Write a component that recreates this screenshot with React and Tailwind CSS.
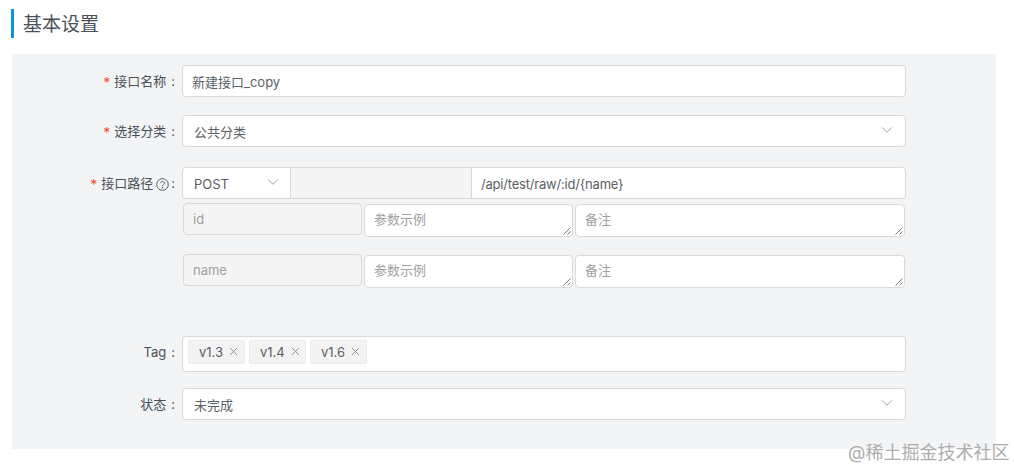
import React from "react";
import { ChevronDown, X } from "lucide-react";

const font = "font-['Inter','Noto_Sans_CJK_SC',sans-serif]";

function Label({ required, children, gap = "ml-[5px]" }) {
  return (
    <div className="w-[170px] shrink-0 h-[32px] flex items-center justify-end pr-[7px] pt-[2px] text-[13px] text-[#4a5058]">
      {required && <span className="text-[#f5482f] mr-[4px] text-[14px]">*</span>}
      {children}
      <span className={gap}>:</span>
    </div>
  );
}

function Resize() {
  return (
    <svg className="absolute right-[1px] bottom-[1px]" width="8" height="8" viewBox="0 0 8 8" fill="none" stroke="#555" strokeWidth="0.8">
      <path d="M0.5 7.5 L7.5 0.5 M4.5 7.5 L7.5 4.5" />
    </svg>
  );
}

function TextArea({ w, text }) {
  return (
    <div className={`${w} relative h-[33px] bg-white border border-[#d9d9d9] rounded-[4px] pl-[9px] pr-[10px] pt-[5px] text-[13px] text-[#a0a0a0]`}>
      {text}
      <Resize />
    </div>
  );
}

function ParamRow({ name }) {
  return (
    <div className="flex gap-[2px] h-[33px] ml-[1px]">
      <div className="w-[179px] h-[32px] -mt-[1px] bg-[#f5f5f5] border border-[#d9d9d9] rounded-[4px] px-[9px] pt-[2px] flex items-center text-[13px] text-[#a0a0a0]">{name}</div>
      <TextArea w="w-[209px]" text="参数示例" />
      <TextArea w="w-[330px]" text="备注" />
    </div>
  );
}

function Tag({ children }) {
  return (
    <div className="h-[24px] w-[57px] bg-[#f3f3f3] border border-[#ececec] rounded-[2px] flex items-center pl-[10px] pt-[2px] text-[13px] text-[#5a5f66]">
      {children}
      <X size={13} strokeWidth={1.7} className="ml-[4px] -mt-[4px] text-[#8c8c8c]" />
    </div>
  );
}

function Chevron() {
  return <ChevronDown size={18} strokeWidth={1.2} className="text-[#9a9a9a] -mt-[6px] shrink-0" />;
}

export default function App() {
  return (
    <div className={`${font} relative w-[1014px] h-[470px] bg-white overflow-hidden`}>
      <div className="pt-[9px] pl-[11px] h-[54px]">
        <h2 className="h-[29px] border-l-[3px] border-[#0a98dc] pl-[9px] text-[19px] leading-[31px] text-[#4a5058]">基本设置</h2>
      </div>

      <div className="ml-[12px] w-[984px] h-[395px] bg-[#f2f4f6] pt-[11px]">
        <div className="flex">
          <Label required>接口名称</Label>
          <div className="w-[724px] h-[32px] bg-white border border-[#d9d9d9] rounded-[4px] px-[9px] pt-[3px] flex items-center text-[13px] text-[#5a5f66]">新建接口_copy</div>
        </div>

        <div className="flex mt-[18px]">
          <Label required>选择分类</Label>
          <div className="w-[724px] h-[32px] bg-white border border-[#d9d9d9] rounded-[4px] pl-[11px] pr-[9px] pt-[3px] flex items-center justify-between text-[13px] text-[#5a5f66]">
            公共分类
            <Chevron />
          </div>
        </div>

        <div className="flex mt-[20px]">
          <Label required gap="ml-[2px]">
            接口路径
            <svg className="ml-[3px]" width="13" height="13" viewBox="0 0 13 13" fill="none" stroke="#4a5058" strokeWidth="0.9">
              <circle cx="6.5" cy="6.5" r="5.8" />
              <path d="M4.6 5.2 C4.6 2.9 8.4 2.9 8.4 5.2 C8.4 6.5 6.5 6.4 6.5 8" />
              <circle cx="6.5" cy="9.8" r="0.4" fill="#4a5058" />
            </svg>
          </Label>
          <div className="w-[724px]">
            <div className="flex h-[32px]">
              <div className="w-[109px] bg-white border border-[#d9d9d9] rounded-l-[4px] pl-[11px] pr-[8px] pt-[4px] flex items-center justify-between text-[13px] text-[#5a5f66]">
                POST
                <Chevron />
              </div>
              <div className="w-[180px] bg-[#f5f5f5] border-y border-[#d9d9d9]" />
              <div className="flex-1 bg-white border border-[#d9d9d9] rounded-r-[4px] px-[9px] pt-[3px] flex items-center text-[13px] tracking-[-0.2px] text-[#5a5f66]">/api/test/raw/:id/{"{name}"}</div>
            </div>
            <div className="mt-[5px] flex flex-col gap-[18px]">
              <ParamRow name="id" />
              <ParamRow name="name" />
            </div>
          </div>
        </div>

        <div className="flex mt-[48px]">
          <Label>Tag</Label>
          <div className="w-[724px] h-[36px] bg-white border border-[#d9d9d9] rounded-[4px] pl-[5px] pt-[3px] flex gap-[4px] items-start">
            <Tag>v1.3</Tag>
            <Tag>v1.4</Tag>
            <Tag>v1.6</Tag>
          </div>
        </div>

        <div className="flex mt-[16px]">
          <Label>状态</Label>
          <div className="w-[724px] h-[32px] bg-white border border-[#d9d9d9] rounded-[4px] pl-[11px] pr-[9px] pt-[3px] flex items-center justify-between text-[13px] text-[#5a5f66]">
            未完成
            <Chevron />
          </div>
        </div>
      </div>

      <div className="absolute left-[848px] top-[442px] text-[18px] leading-[22px] text-[#adadad] whitespace-nowrap">@稀土掘金技术社区</div>
    </div>
  );
}
